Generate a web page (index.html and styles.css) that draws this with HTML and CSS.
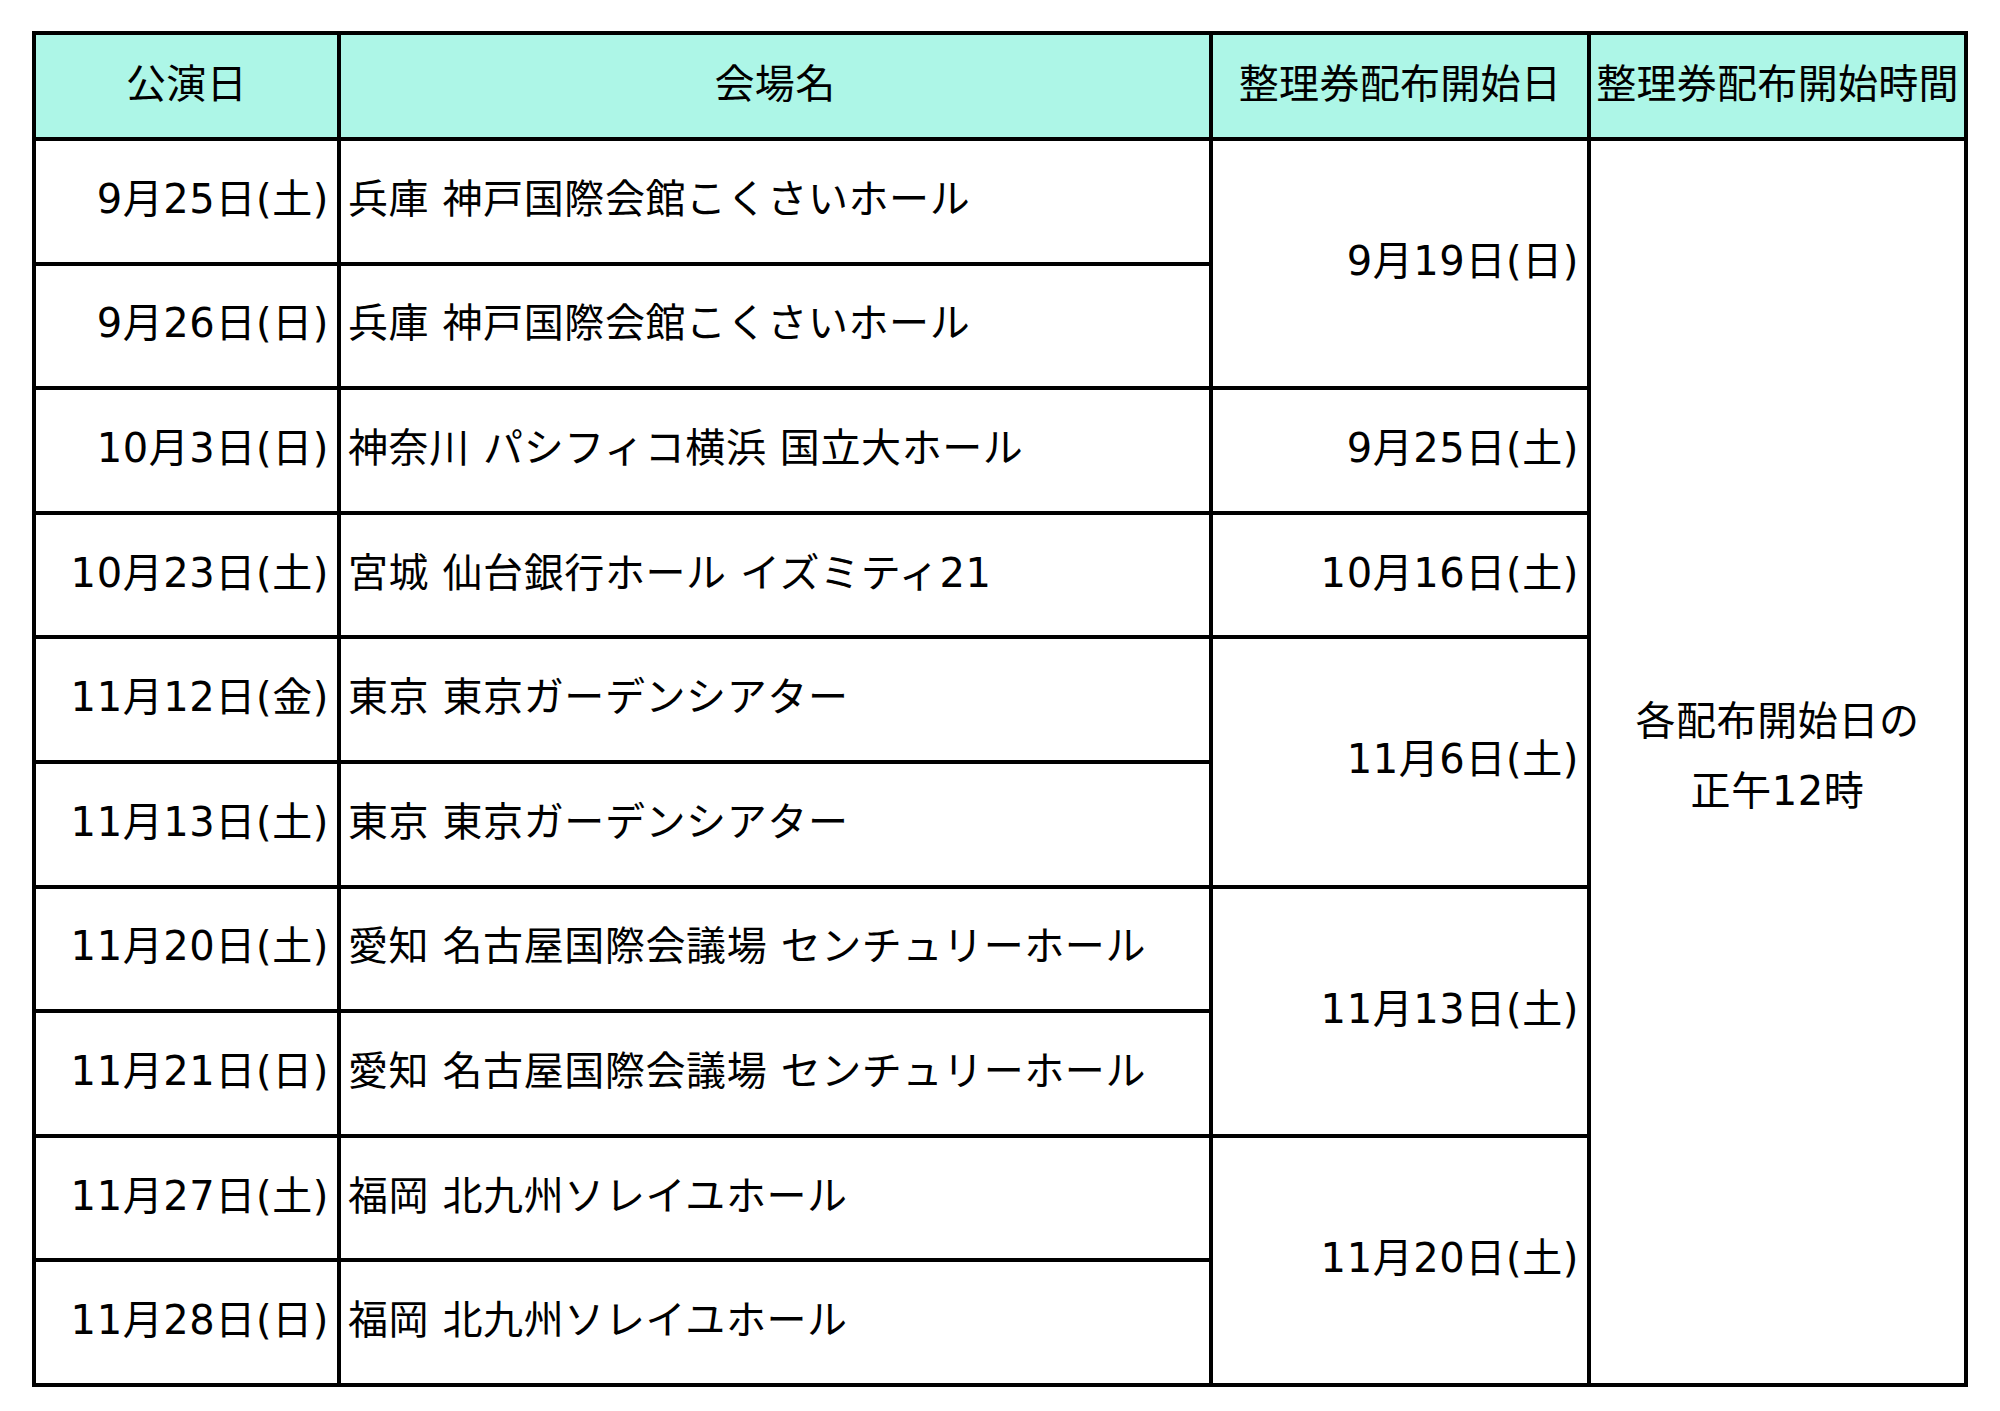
FILE: index.html
```html
<!DOCTYPE html>
<html lang="ja">
<head>
<meta charset="utf-8">
<title>整理券配布スケジュール</title>
<link rel="stylesheet" href="styles.css">
</head>
<body>
<div class="page">
<table class="schedule">
  <colgroup>
    <col class="c-date">
    <col class="c-venue">
    <col class="c-start">
    <col class="c-time">
  </colgroup>
  <thead>
    <tr class="head-row">
      <th>公演日</th>
      <th>会場名</th>
      <th>整理券配布開始日</th>
      <th class="last">整理券配布開始時間</th>
    </tr>
  </thead>
  <tbody>
    <tr>
      <td class="date">9月25日(土)</td>
      <td class="venue">兵庫 神戸国際会館こくさいホール</td>
      <td class="start" rowspan="2">9月19日(日)</td>
      <td class="time last" rowspan="10">各配布開始日の<br>正午12時</td>
    </tr>
    <tr>
      <td class="date">9月26日(日)</td>
      <td class="venue">兵庫 神戸国際会館こくさいホール</td>
    </tr>
    <tr>
      <td class="date">10月3日(日)</td>
      <td class="venue">神奈川 パシフィコ横浜 国立大ホール</td>
      <td class="start">9月25日(土)</td>
    </tr>
    <tr>
      <td class="date">10月23日(土)</td>
      <td class="venue">宮城 仙台銀行ホール イズミティ21</td>
      <td class="start">10月16日(土)</td>
    </tr>
    <tr>
      <td class="date">11月12日(金)</td>
      <td class="venue">東京 東京ガーデンシアター</td>
      <td class="start" rowspan="2">11月6日(土)</td>
    </tr>
    <tr>
      <td class="date">11月13日(土)</td>
      <td class="venue">東京 東京ガーデンシアター</td>
    </tr>
    <tr>
      <td class="date">11月20日(土)</td>
      <td class="venue">愛知 名古屋国際会議場 センチュリーホール</td>
      <td class="start" rowspan="2">11月13日(土)</td>
    </tr>
    <tr>
      <td class="date">11月21日(日)</td>
      <td class="venue">愛知 名古屋国際会議場 センチュリーホール</td>
    </tr>
    <tr>
      <td class="date">11月27日(土)</td>
      <td class="venue">福岡 北九州ソレイユホール</td>
      <td class="start" rowspan="2">11月20日(土)</td>
    </tr>
    <tr>
      <td class="date">11月28日(日)</td>
      <td class="venue">福岡 北九州ソレイユホール</td>
    </tr>
  </tbody>
</table>
</div>
</body>
</html>
```

FILE: styles.css
```css
html, body {
  margin: 0;
  padding: 0;
  background: #ffffff;
}

.page {
  padding: 31px 0 0 32px;
}

.schedule {
  border-collapse: separate;
  border-spacing: 0;
  table-layout: fixed;
  width: 1936px;
  border-left: 4px solid #000;
  border-top: 4px solid #000;
  font-family: "DejaVu Sans", "Noto Sans CJK JP", sans-serif;
  font-size: 40px;
  line-height: 48px;
  letter-spacing: 0.6px;
  color: #000;
}

.c-date { width: 305px; }
.c-venue { width: 872px; }
.c-start { width: 378px; }
.c-time { width: 377px; }

.schedule th,
.schedule td {
  border-right: 4px solid #000;
  border-bottom: 4px solid #000;
  padding: 0 0 5px 0;
  white-space: nowrap;
  vertical-align: middle;
  overflow: hidden;
}

.head-row {
  height: 106px;
}

.schedule th {
  background: #adf6e7;
  font-weight: normal;
  text-align: center;
  letter-spacing: 0.3px;
}

.schedule tbody tr {
  height: 124.6px;
}

.schedule .date {
  text-align: right;
  padding-right: 8px;
}

.schedule .venue {
  text-align: left;
  padding-left: 7px;
}

.schedule .start {
  text-align: right;
  padding-right: 8px;
}

.schedule .time {
  text-align: center;
  line-height: 70px;
  padding-bottom: 12px;
}
```
